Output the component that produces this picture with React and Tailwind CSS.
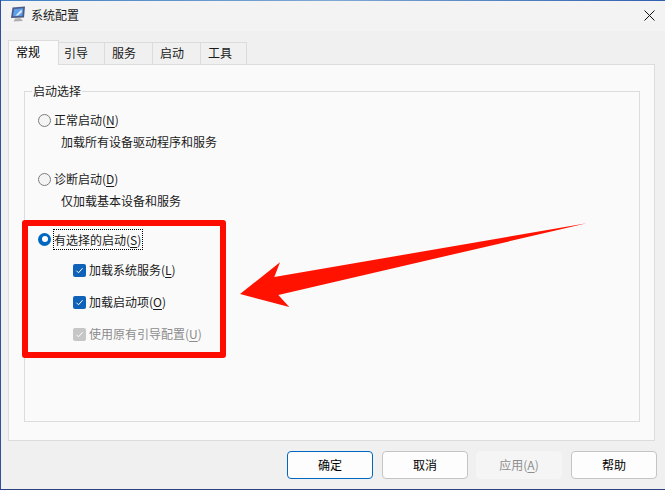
import React from "react";

const font = { fontFamily: '"Noto Sans CJK SC", sans-serif' };

function Radio({ checked }) {
  return checked ? (
    <span className="w-[13px] h-[13px] rounded-full bg-[#0067c0] flex items-center justify-center shrink-0">
      <span className="w-[6px] h-[6px] rounded-full bg-white" />
    </span>
  ) : (
    <span className="w-[13px] h-[13px] rounded-full border border-[#7d7d7d] bg-[#f4f4f4] shrink-0" />
  );
}

function Check({ disabled }) {
  return (
    <span className={`w-[13px] h-[13px] rounded-[2px] flex items-center justify-center shrink-0 ${disabled ? "bg-[#c6c6c6]" : "bg-[#0f62b8]"}`}>
      <svg width="9" height="9" viewBox="0 0 9 9" fill="none">
        <path d="M1.5 4.8 L3.5 6.8 L7.6 2.2" stroke="white" strokeWidth="1" />
      </svg>
    </span>
  );
}

function Mn({ children, k }) {
  return (
    <span>
      {children}(<span className="underline underline-offset-2">{k}</span>)
    </span>
  );
}

function Btn({ children, primary, disabled, className = "" }) {
  const cls = primary
    ? "border-[#0067c0] bg-[#fdfdfd] text-black"
    : disabled
      ? "border-[#f5f5f5] bg-[#f5f5f5] text-[#8f8f8f]"
      : "border-[#c4c4c4] bg-[#fdfdfd] text-black";
  return (
    <div className={`w-[86px] h-[28px] rounded-[4px] border flex items-center justify-center text-[12px] ${cls} ${className}`}>
      {children}
    </div>
  );
}

function Tab({ children, active, className }) {
  return active ? (
    <div className={`${className} h-[25px] -mb-px z-10 bg-[#fafafa] border border-b-0 border-[#dcdcdc] flex items-center text-[12px] text-black pb-[2px]`}>
      {children}
    </div>
  ) : (
    <div className={`${className} h-[22px] bg-[#f0f0f0] border border-l-0 border-b-0 border-[#dcdcdc] flex items-center text-[12px] text-[#1a1a1a] pb-[2px]`}>
      {children}
    </div>
  );
}

export default function App() {
  return (
    <div style={font} className="relative w-[665px] h-[490px] overflow-hidden bg-[#f0f0f0] text-[12px] text-[#1a1a1a]">
      <div className="h-[31px] bg-[#f3f3f3] flex items-center pl-[10px] pb-[2px]">
        <svg width="16" height="17" viewBox="0 0 16 17" className="shrink-0">
          <path d="M2.5 1.5 L15 0.5 L14 11.5 L1 12 Z" fill="#4a5a86" />
          <path d="M4 3 L13.2 2.2 L12.4 9.8 L3 10.3 Z" fill="#5f9fe8" />
          <path d="M5.5 9.5 L11.5 3.5 L12 6 L8 9.6 Z" fill="#dcecff" />
          <path d="M5 12.5 L10.5 12.3 L13 15 L3.5 15.4 Z" fill="#b0b0b0" />
        </svg>
        <span className="ml-[5px] text-[#1a1a1a]">系统配置</span>
        <svg width="11" height="11" viewBox="0 0 11 11" className="ml-auto mr-[10px] mt-[2px]">
          <path d="M0.5 0.5 L10.5 10.5 M10.5 0.5 L0.5 10.5" stroke="#111" strokeWidth="1" />
        </svg>
      </div>

      <div className="pl-[8px] pr-[10px] pt-[9px]">
        <div className="flex items-end">
          <Tab active className="w-[51px] pl-[7px]">常规</Tab>
          <Tab className="w-[46px] pl-[5px]">引导</Tab>
          <Tab className="w-[48px] pl-[7px]">服务</Tab>
          <Tab className="w-[48px] pl-[7px]">启动</Tab>
          <Tab className="w-[46px] pl-[7px]">工具</Tab>
        </div>
        <div className="h-[377px] border border-[#dcdcdc] bg-[#fafafa] pl-[15px] pr-[14px] pt-[26px]">
          <div className="relative h-[331px] border border-[#dcdcdc]">
            <span className="absolute left-[7px] -top-[10px] bg-[#fafafa] px-[1px] leading-[18px]">启动选择</span>
            <div className="pl-[13px] pt-[18px]">
              <div className="h-[20px] flex items-center gap-[3px]">
                <Radio />
                <Mn k="N">正常启动</Mn>
              </div>
              <div className="h-[20px] mt-[2px] flex items-center pl-[23px]">加载所有设备驱动程序和服务</div>
              <div className="h-[20px] mt-[17px] flex items-center gap-[3px]">
                <Radio />
                <Mn k="D">诊断启动</Mn>
              </div>
              <div className="h-[20px] mt-[2px] flex items-center pl-[23px]">仅加载基本设备和服务</div>
              <div className="h-[20px] mt-[18px] flex items-center gap-[3px]">
                <Radio checked />
                <span className="outline-1 outline-dotted outline-black leading-[19px] pr-[1px]">
                  <Mn k="S">有选择的启动</Mn>
                </span>
              </div>
              <div className="h-[20px] mt-[11px] ml-[35px] flex items-center gap-[3px]">
                <Check />
                <Mn k="L">加载系统服务</Mn>
              </div>
              <div className="h-[20px] mt-[12px] ml-[35px] flex items-center gap-[3px]">
                <Check />
                <Mn k="O">加载启动项</Mn>
              </div>
              <div className="h-[20px] mt-[12px] ml-[35px] flex items-center gap-[3px] text-[#8c8c8c]">
                <Check disabled />
                <Mn k="U">使用原有引导配置</Mn>
              </div>
            </div>
          </div>
        </div>
      </div>

      <div className="flex justify-end pr-[8px] mt-[10px]">
        <Btn primary>确定</Btn>
        <Btn className="ml-[9px]">取消</Btn>
        <Btn disabled className="ml-[8px]"><Mn k="A">应用</Mn></Btn>
        <Btn className="ml-[9px]">帮助</Btn>
      </div>

      <div className="absolute left-0 top-0 w-full h-px bg-gradient-to-r from-[#3f7fc4] via-[#7fa8d4] to-[#2f5fb0]" />
      <div className="absolute left-0 top-0 w-px h-full bg-[#2f50a0]" />
      <div className="absolute left-0 bottom-0 w-full h-px bg-[#2c3f80]" />
      <div className="absolute left-[22px] top-[220px] w-[204px] h-[138px] border-[6px] border-[#ff0c00] rounded-[3px]" />
      <svg className="absolute left-0 top-0" width="665" height="490" viewBox="0 0 665 490">
        <polygon points="240,294 280,262.3 274.3,277 586.7,223.3 278.3,295 289.3,307" fill="#ff1200" />
      </svg>
    </div>
  );
}
